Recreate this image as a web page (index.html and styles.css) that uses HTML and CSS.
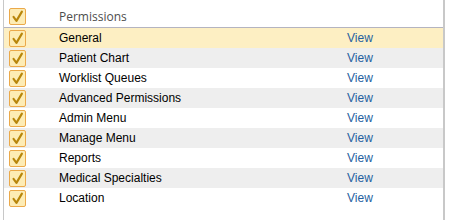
FILE: index.html
```html
<!DOCTYPE html>
<html lang="en">
<head>
    <meta charset="UTF-8">
    <title>Permissions</title>
    <link rel="stylesheet" href="styles.css">
</head>
<body>
    <div class="perm-table">
        <div class="perm-row header">
            <span class="check"><svg viewBox="0 0 17 17"><path d="M4 9 L7.3 13.5 L13.5 3"/></svg></span>
            <span class="name">Permissions</span>
            <span class="action"></span>
        </div>
        <div class="perm-row selected">
            <span class="check"><svg viewBox="0 0 17 17"><path d="M4 9 L7.3 13.5 L13.5 3"/></svg></span>
            <span class="name">General</span>
            <a class="action">View</a>
        </div>
        <div class="perm-row alt">
            <span class="check"><svg viewBox="0 0 17 17"><path d="M4 9 L7.3 13.5 L13.5 3"/></svg></span>
            <span class="name">Patient Chart</span>
            <a class="action">View</a>
        </div>
        <div class="perm-row">
            <span class="check"><svg viewBox="0 0 17 17"><path d="M4 9 L7.3 13.5 L13.5 3"/></svg></span>
            <span class="name">Worklist Queues</span>
            <a class="action">View</a>
        </div>
        <div class="perm-row alt">
            <span class="check"><svg viewBox="0 0 17 17"><path d="M4 9 L7.3 13.5 L13.5 3"/></svg></span>
            <span class="name">Advanced Permissions</span>
            <a class="action">View</a>
        </div>
        <div class="perm-row">
            <span class="check"><svg viewBox="0 0 17 17"><path d="M4 9 L7.3 13.5 L13.5 3"/></svg></span>
            <span class="name">Admin Menu</span>
            <a class="action">View</a>
        </div>
        <div class="perm-row alt">
            <span class="check"><svg viewBox="0 0 17 17"><path d="M4 9 L7.3 13.5 L13.5 3"/></svg></span>
            <span class="name">Manage Menu</span>
            <a class="action">View</a>
        </div>
        <div class="perm-row">
            <span class="check"><svg viewBox="0 0 17 17"><path d="M4 9 L7.3 13.5 L13.5 3"/></svg></span>
            <span class="name">Reports</span>
            <a class="action">View</a>
        </div>
        <div class="perm-row alt">
            <span class="check"><svg viewBox="0 0 17 17"><path d="M4 9 L7.3 13.5 L13.5 3"/></svg></span>
            <span class="name">Medical Specialties</span>
            <a class="action">View</a>
        </div>
        <div class="perm-row">
            <span class="check"><svg viewBox="0 0 17 17"><path d="M4 9 L7.3 13.5 L13.5 3"/></svg></span>
            <span class="name">Location</span>
            <a class="action">View</a>
        </div>
    </div>
</body>
</html>
```

FILE: styles.css
```css
* {
    margin: 0;
    padding: 0;
    box-sizing: border-box;
}

body {
    font-family: "Liberation Sans", Arial, sans-serif;
    font-size: 12px;
    background: #fff;
    color: #000;
    padding-left: 3px;
}

.perm-table {
    width: 442px;
    height: 220px;
    border-left: 1px solid #c8c8c8;
    border-right: 2px solid #c8c8c8;
}

.perm-row {
    display: flex;
    align-items: center;
    height: 20px;
}

.perm-row.header {
    height: 28px;
    padding-top: 5px;
    border-bottom: 1px solid #b4b4c0;
}

.perm-row.header .name {
    font-family: "Open Sans", sans-serif;
    font-size: 12px;
    color: #4d4d4d;
}

.perm-row.selected {
    background: #fdefc3;
}

.perm-row.alt {
    background: #eeeeee;
}

.check {
    width: 17px;
    height: 17px;
    margin-left: 5px;
    border: 1px solid #eba94a;
    border-radius: 2px;
    background: #fdecb5;
    display: flex;
}

.check svg {
    width: 15px;
    height: 15px;
}

.check path {
    fill: none;
    stroke: #b8860b;
    stroke-width: 2.4;
    stroke-linecap: round;
    stroke-linejoin: round;
}

.name {
    margin-left: 33px;
    width: 288px;
}

.action {
    color: #1f5f9f;
    text-decoration: none;
}
```
